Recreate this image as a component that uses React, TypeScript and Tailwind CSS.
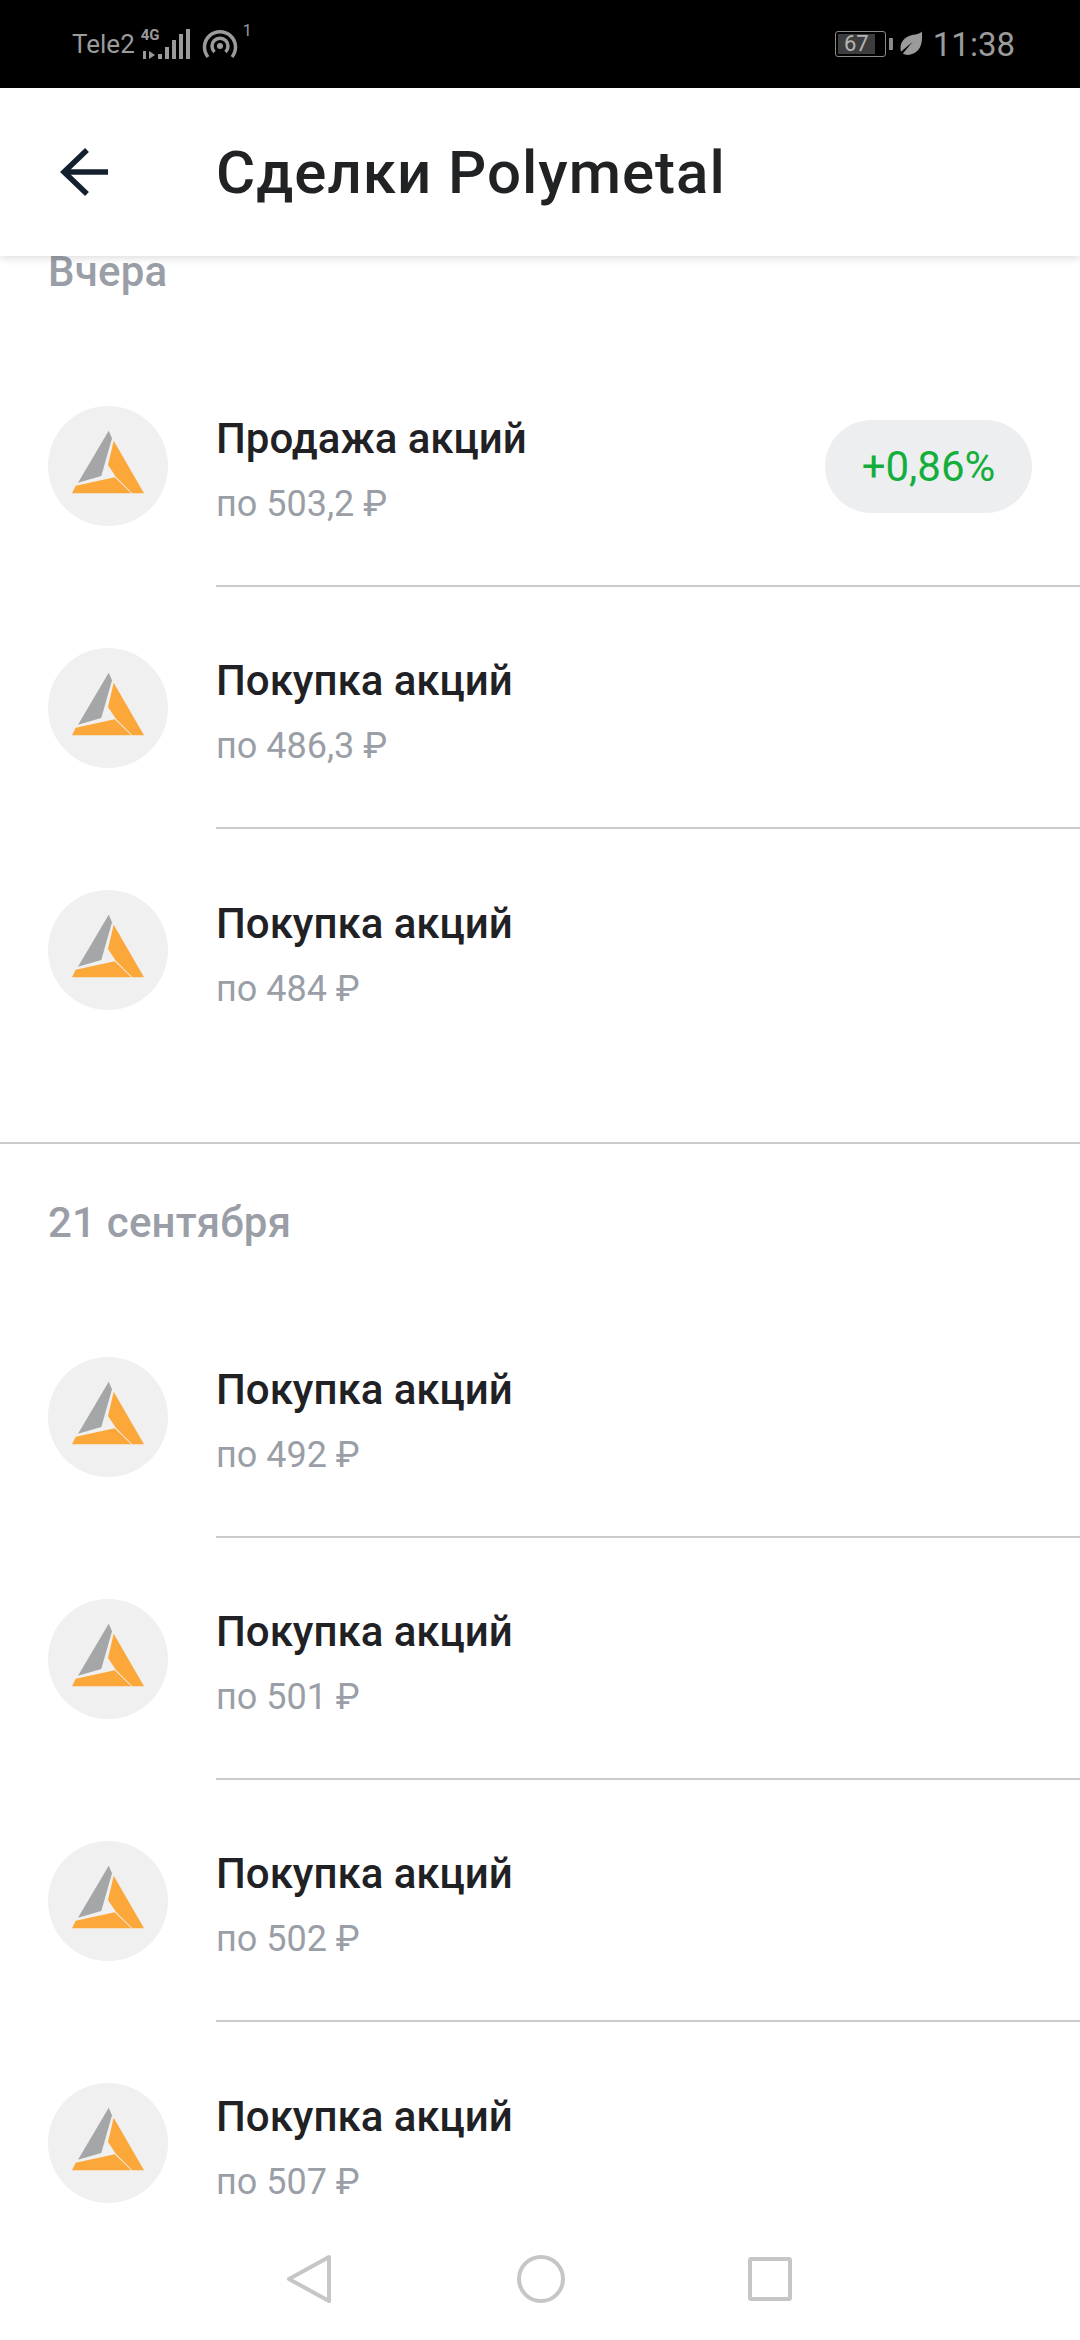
import React from 'react';

const Logo = () => (
  <svg viewBox="0 0 120 120" className="w-[120px] h-[120px]">
    <polygon points="60.7,24.7 64,32.3 53.3,70 30,76.7" fill="#a5a6a8" />
    <polygon points="65.7,34.7 96,87.3 84.3,87.3 68,71 60,59" fill="#fba73a" />
    <polygon points="24,87.3 27.7,79.7 66.7,71.3 83.3,87.3" fill="#fba73a" />
  </svg>
);

const TradeRow = ({ title, price, badge, divider = true }: { title: string; price: string; badge?: string; divider?: boolean }) => (
  <div className="flex h-[242px] shrink-0 items-center pl-[48px]">
    <div className="flex h-[120px] w-[120px] shrink-0 items-center justify-center rounded-full bg-[#f0f0f0]">
      <Logo />
    </div>
    <div className={`ml-[48px] flex h-full flex-1 items-center pr-[48px] ${divider ? 'border-b-[2px] border-[#c9cbcc]' : ''}`}>
      <div className="flex-1 pt-[12px]">
        <div className="text-[42px] leading-[48px] font-medium text-[#1f2124]">{title}</div>
        <div className="mt-[17px] text-[36px] leading-[48px] text-[#9a9ea6]">{price}</div>
      </div>
      {badge && (
        <div className="mt-[2px] flex h-[93px] w-[207px] items-center justify-center rounded-full bg-[#eceeef] text-[42px] text-[#14ae3c]">
          {badge}
        </div>
      )}
    </div>
  </div>
);

const SectionTitle = ({ children, className }: { children: React.ReactNode; className: string }) => (
  <div className={`pl-[48px] text-[42px] font-medium tracking-[0.2px] text-[#9a9ea6] ${className}`}>{children}</div>
);

const StatusBar = () => (
  <div className="flex h-[88px] shrink-0 items-center justify-between bg-black pl-[72px] pr-[65px] text-[#9b9b9b]">
    <div className="flex items-center">
      <span className="text-[26px] leading-none">Tele2</span>
      <div className="relative ml-[5px] h-[32px] w-[51px]">
        <span className="absolute left-[1px] top-[0px] text-[15px] leading-[15px] font-bold">4G</span>
        <svg viewBox="0 0 51 32" className="absolute inset-0 h-full w-full" fill="currentColor">
          <path d="M3 23h3v8H3zM9 23l6 4-6 4zM18 26h4v5h-4zM25 19h4v12h-4zM32 12h4v19h-4zM39 6h4v25h-4zM46 1h4v30h-4z" />
        </svg>
      </div>
      <svg viewBox="0 0 36 32" className="ml-[11px] h-[32px] w-[36px]" fill="none" stroke="currentColor" strokeWidth="3.5">
        <path d="M6 29a15.5 15.5 0 1 1 24 0" />
        <path d="M12.5 24a8 8 0 1 1 11 0" />
        <circle cx="18" cy="18" r="3" fill="currentColor" stroke="none" />
      </svg>
      <span className="mb-[26px] ml-[5px] text-[16px] leading-none">1</span>
    </div>
    <div className="flex items-center">
      <div className="flex h-[26px] w-[51px] items-center rounded-[3px] border-[1.5px] border-[#8a8a8a] p-[2px]">
        <div className="flex h-full w-[37px] items-center justify-center bg-[#3d3d3d] text-[22px] leading-none text-[#b5b5b5]">67</div>
      </div>
      <div className="ml-[3px] h-[12px] w-[4px] rounded-r-[1px] bg-[#8a8a8a]" />
      <svg viewBox="0 0 24 26" className="ml-[7px] h-[26px] w-[23px]" fill="currentColor">
        <path d="M23 0C23 8 24 18 14 23 10 25 6 25 3 23L13 11 1 21C-1 12 4 6 11 4 15 3 20 3 23 0Z" />
      </svg>
      <span className="ml-[10px] text-[33px] leading-none">11:38</span>
    </div>
  </div>
);

const Header = () => (
  <div className="z-10 flex h-[168px] shrink-0 items-center bg-white pl-[60px] shadow-[0_2px_8px_rgba(0,0,0,0.14)]">
    <svg viewBox="0 0 48 48" className="h-[48px] w-[48px]" fill="none" stroke="#14202e" strokeWidth="5.5">
      <path d="M27 2 4 24l23 22" />
      <path d="M5 24h44" />
    </svg>
    <h1 className="ml-[108px] pt-[2px] text-[60px] font-medium leading-none tracking-[1px] text-[#212224]">Сделки Polymetal</h1>
  </div>
);

const NavBar = () => (
  <div className="z-10 flex h-[124px] shrink-0 items-center justify-center bg-white pr-[2px] pt-[2px]">
    <svg viewBox="0 0 44 48" className="h-[48px] w-[44px]" fill="none" stroke="#c6c6c6" strokeWidth="4" strokeLinejoin="round">
      <path d="M42 2 2 24l40 22z" />
    </svg>
    <div className="ml-[186px] h-[48px] w-[48px] rounded-full border-[4px] border-[#c6c6c6]" />
    <div className="ml-[183px] h-[44px] w-[44px] rounded-[3px] border-[4px] border-[#c6c6c6]" />
  </div>
);

export default function App() {
  return (
    <div className="flex h-[2340px] w-[1080px] flex-col overflow-hidden bg-white font-['Roboto',sans-serif]">
      <StatusBar />
      <Header />
      <div className="min-h-0 flex-1 overflow-hidden">
        <SectionTitle className="mb-[57px] leading-[32px]">Вчера</SectionTitle>
        <TradeRow title="Продажа акций" price="по 503,2 ₽" badge="+0,86%" />
        <TradeRow title="Покупка акций" price="по 486,3 ₽" />
        <TradeRow title="Покупка акций" price="по 484 ₽" divider={false} />
        <div className="mt-[71px] border-t-[2px] border-[#c9cbcc]" />
        <SectionTitle className="mt-[55px] mb-[49px] leading-[48px]">21 сентября</SectionTitle>
        <TradeRow title="Покупка акций" price="по 492 ₽" />
        <TradeRow title="Покупка акций" price="по 501 ₽" />
        <TradeRow title="Покупка акций" price="по 502 ₽" />
        <TradeRow title="Покупка акций" price="по 507 ₽" divider={false} />
      </div>
      <NavBar />
    </div>
  );
}
